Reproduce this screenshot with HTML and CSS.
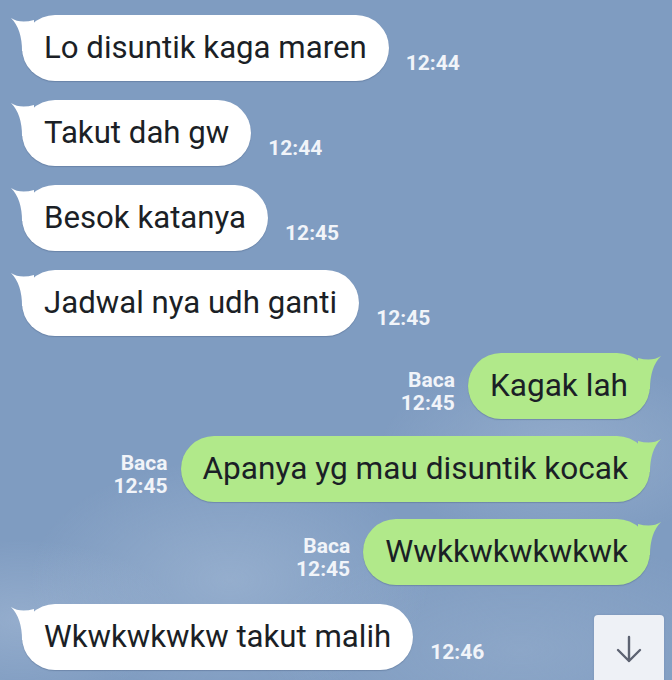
FILE: index.html
```html
<!DOCTYPE html>
<html>
<head>
  <meta charset="utf-8">
  <title>Chat</title>
  <link rel="stylesheet" href="styles.css">
</head>
<body>
  <div class="chat">
    <div class="row row-in">
      <div class="bubble bubble-in">
        <svg class="tail" viewBox="0 0 24 36" aria-hidden="true"><path d="M1 3 Q10 9 24 5 L24 36 L12 36 Q12 14 1 3 Z"/></svg>
        Lo disuntik kaga maren
      </div>
      <span class="time">12:44</span>
    </div>

    <div class="row row-in">
      <div class="bubble bubble-in">
        <svg class="tail" viewBox="0 0 24 36" aria-hidden="true"><path d="M1 3 Q10 9 24 5 L24 36 L12 36 Q12 14 1 3 Z"/></svg>
        Takut dah gw
      </div>
      <span class="time">12:44</span>
    </div>

    <div class="row row-in">
      <div class="bubble bubble-in">
        <svg class="tail" viewBox="0 0 24 36" aria-hidden="true"><path d="M1 3 Q10 9 24 5 L24 36 L12 36 Q12 14 1 3 Z"/></svg>
        Besok katanya
      </div>
      <span class="time">12:45</span>
    </div>

    <div class="row row-in">
      <div class="bubble bubble-in">
        <svg class="tail" viewBox="0 0 24 36" aria-hidden="true"><path d="M1 3 Q10 9 24 5 L24 36 L12 36 Q12 14 1 3 Z"/></svg>
        Jadwal nya udh ganti
      </div>
      <span class="time">12:45</span>
    </div>

    <div class="row row-out">
      <div class="read">
        <span>Baca</span>
        <span>12:45</span>
      </div>
      <div class="bubble bubble-out">
        <svg class="tail" viewBox="0 0 24 36" aria-hidden="true"><path d="M23 3 Q14 9 0 5 L0 36 L12 36 Q12 14 23 3 Z"/></svg>
        Kagak lah
      </div>
    </div>

    <div class="row row-out">
      <div class="read">
        <span>Baca</span>
        <span>12:45</span>
      </div>
      <div class="bubble bubble-out">
        <svg class="tail" viewBox="0 0 24 36" aria-hidden="true"><path d="M23 3 Q14 9 0 5 L0 36 L12 36 Q12 14 23 3 Z"/></svg>
        Apanya yg mau disuntik kocak
      </div>
    </div>

    <div class="row row-out">
      <div class="read">
        <span>Baca</span>
        <span>12:45</span>
      </div>
      <div class="bubble bubble-out">
        <svg class="tail" viewBox="0 0 24 36" aria-hidden="true"><path d="M23 3 Q14 9 0 5 L0 36 L12 36 Q12 14 23 3 Z"/></svg>
        Wwkkwkwkwkwk
      </div>
    </div>

    <div class="row row-in">
      <div class="bubble bubble-in">
        <svg class="tail" viewBox="0 0 24 36" aria-hidden="true"><path d="M1 3 Q10 9 24 5 L24 36 L12 36 Q12 14 1 3 Z"/></svg>
        Wkwkwkwkw takut malih
      </div>
      <span class="time">12:46</span>
    </div>
  </div>

  <!-- tombol scroll ke bawah -->
  <button class="scroll-down" aria-label="Scroll ke bawah">
    <svg viewBox="0 0 32 32" width="32" height="32"><path d="M16 4 V28 M5 17 L16 28 L27 17" fill="none" stroke="#5d6372" stroke-width="2.4" stroke-linecap="round" stroke-linejoin="round"/></svg>
  </button>
</body>
</html>
```

FILE: styles.css
```css
* {
  margin: 0;
  padding: 0;
  box-sizing: border-box;
}

html, body {
  height: 100%;
}

body {
  font-family: Roboto, "Noto Sans", "Liberation Sans", sans-serif;
  overflow: hidden;
  background-color: #7f9cc1;
  /* awan tipis di bagian bawah */
  background-image:
    radial-gradient(ellipse 180px 90px at 560px 450px, rgba(170, 190, 215, 0.45), rgba(170, 190, 215, 0)),
    radial-gradient(ellipse 200px 120px at 230px 580px, rgba(175, 195, 220, 0.45), rgba(175, 195, 220, 0)),
    radial-gradient(ellipse 160px 80px at 20px 620px, rgba(180, 198, 222, 0.4), rgba(180, 198, 222, 0)),
    radial-gradient(ellipse 260px 110px at 520px 650px, rgba(160, 182, 210, 0.4), rgba(160, 182, 210, 0));
}

/* Daftar pesan */
.chat {
  display: flex;
  flex-direction: column;
  gap: 17px;
  padding: 15px 22px 0;
}

.row {
  display: flex;
  align-items: flex-end;
}

.row-in + .row-in,
.row-out + .row-in {
  margin-top: 2px;
}

.row-out {
  justify-content: flex-end;
}

/* Gelembung pesan */
.bubble {
  position: relative;
  font-size: 31.6px;
  line-height: 36px;
  color: #1b1f26;
  padding: 15px 22px;
  border-radius: 33px;
  white-space: nowrap;
  box-shadow: 0 1px 1px rgba(40, 60, 95, 0.25);
}

.bubble-in {
  font-size: 31.2px;
  background: #ffffff;
}

.bubble-out {
  background: #b1e98a;
}

.tail {
  position: absolute;
  top: 0;
  width: 24px;
  height: 36px;
}

.bubble-in .tail {
  left: -12px;
  fill: #ffffff;
}

.bubble-out .tail {
  right: -12px;
  fill: #b1e98a;
}

/* Waktu & status baca */
.time {
  margin-left: 17px;
  margin-bottom: 7px;
  font-size: 21px;
  line-height: 21px;
  font-weight: 700;
  color: #f1f4f9;
}

.read {
  display: flex;
  flex-direction: column;
  align-items: flex-end;
  margin-right: 13px;
  margin-bottom: 4px;
  font-size: 21px;
  line-height: 23px;
  font-weight: 700;
  color: #f1f4f9;
}

/* Tombol scroll */
.scroll-down {
  position: absolute;
  left: 594px;
  top: 615px;
  width: 70px;
  height: 80px;
  border: none;
  border-radius: 4px;
  background: #eef1f6;
  box-shadow: 0 0 2px rgba(40, 60, 95, 0.2);
  display: flex;
  justify-content: center;
  padding-top: 18px;
}
```
